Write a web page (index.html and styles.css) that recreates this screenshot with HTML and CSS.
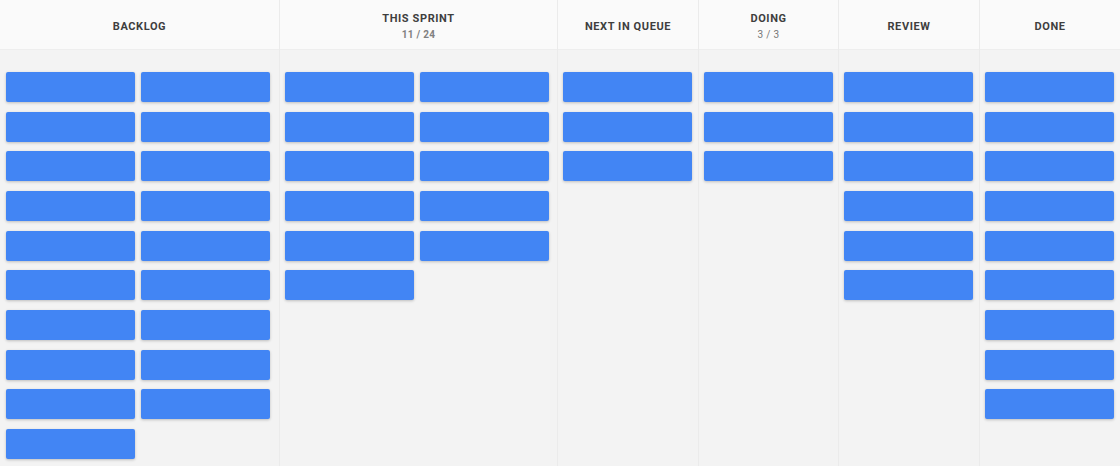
FILE: index.html
```html
<!DOCTYPE html>
<html lang="en">

<head>
  <meta charset="UTF-8" />
  <meta name="viewport" content="width=device-width, initial-scale=1.0" />
  <title>Board</title>
  <link rel="stylesheet" href="styles.css">
</head>

<body>

  <div class="board">
    <!-- Backlog -->
    <section class="lane wide">
      <header class="lane-head">
        <h2>Backlog</h2>
      </header>
      <div class="cards">
        <div class="card"></div><div class="card"></div>
        <div class="card"></div><div class="card"></div>
        <div class="card"></div><div class="card"></div>
        <div class="card"></div><div class="card"></div>
        <div class="card"></div><div class="card"></div>
        <div class="card"></div><div class="card"></div>
        <div class="card"></div><div class="card"></div>
        <div class="card"></div><div class="card"></div>
        <div class="card"></div><div class="card"></div>
        <div class="card"></div>
      </div>
    </section>

    <!-- This sprint -->
    <section class="lane wide sprint">
      <header class="lane-head">
        <h2>This Sprint</h2>
        <span class="count bold">11 / 24</span>
      </header>
      <div class="cards">
        <div class="card"></div><div class="card"></div>
        <div class="card"></div><div class="card"></div>
        <div class="card"></div><div class="card"></div>
        <div class="card"></div><div class="card"></div>
        <div class="card"></div><div class="card"></div>
        <div class="card"></div>
      </div>
    </section>

    <section class="lane">
      <header class="lane-head">
        <h2>Next in Queue</h2>
      </header>
      <div class="cards">
        <div class="card"></div>
        <div class="card"></div>
        <div class="card"></div>
      </div>
    </section>

    <section class="lane doing">
      <header class="lane-head">
        <h2>Doing</h2>
        <span class="count">3 / 3</span>
      </header>
      <div class="cards">
        <div class="card"></div>
        <div class="card"></div>
        <div class="card"></div>
      </div>
    </section>

    <section class="lane">
      <header class="lane-head">
        <h2>Review</h2>
      </header>
      <div class="cards">
        <div class="card"></div>
        <div class="card"></div>
        <div class="card"></div>
        <div class="card"></div>
        <div class="card"></div>
        <div class="card"></div>
      </div>
    </section>

    <section class="lane">
      <header class="lane-head">
        <h2>Done</h2>
      </header>
      <div class="cards">
        <div class="card"></div>
        <div class="card"></div>
        <div class="card"></div>
        <div class="card"></div>
        <div class="card"></div>
        <div class="card"></div>
        <div class="card"></div>
        <div class="card"></div>
        <div class="card"></div>
      </div>
    </section>
  </div>

</body>

</html>
```

FILE: styles.css
```css
body {
  font-family: Roboto, 'Liberation Sans', sans-serif;
  background: #f3f3f3;
  margin: 0;
  padding: 0;
  color: #444;
}

.board {
  display: flex;
  height: 466px;
  overflow: hidden;
}

.lane {
  width: 141px;
  flex: none;
  display: flex;
  flex-direction: column;
  border-left: 1px solid #ebebeb;
  box-sizing: border-box;
}

.lane:first-child {
  border-left: none;
}

.lane.wide {
  width: 279px;
}

.lane.sprint {
  width: 278px;
}

.lane.doing {
  width: 140px;
}

.lane-head {
  height: 50px;
  flex: none;
  background: #fafafa;
  border-bottom: 1px solid #eeeeee;
  box-sizing: border-box;
  display: flex;
  flex-direction: column;
  align-items: center;
  justify-content: center;
  padding-top: 4px;
}

.lane-head h2 {
  margin: 0;
  font-size: 11px;
  font-weight: 700;
  letter-spacing: 0.6px;
  text-transform: uppercase;
  color: #3e3e3e;
  line-height: 14px;
}

.count {
  font-size: 10px;
  color: #777;
  line-height: 13px;
  margin-top: 2px;
  letter-spacing: 0.3px;
}

.count.bold {
  font-weight: 700;
  color: #808080;
}

.cards {
  display: flex;
  flex-wrap: wrap;
  align-content: flex-start;
  column-gap: 6px;
  row-gap: 9.67px;
  padding: 22px 0 0 6px;
}

.lane:not(:first-child) .cards {
  padding-left: 5px;
}

.card {
  width: 129px;
  height: 30px;
  background: #4285f4;
  border-radius: 2px;
  box-shadow: 0 1px 3px rgba(0, 0, 0, 0.22);
}
```
